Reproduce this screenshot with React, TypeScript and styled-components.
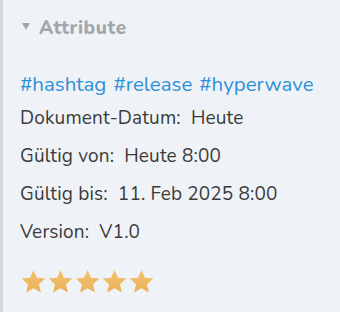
import React from 'react';
import styled, {createGlobalStyle} from "styled-components";

const GlobalStyle = createGlobalStyle`
  html, body {
    margin: 0;
    padding: 0;
    background: #eff3f7;
  }
  body {
    font-family: Nunito, "Open Sans", sans-serif;
  }
`

type RowPropsType = {
    label: string
    value: string
}

const Row = (props: RowPropsType) => {
    return (
        <StyledRow>
            {props.label}:&nbsp;&nbsp;{props.value}
        </StyledRow>
    );
};

const Star = () => (
    <svg width="27" height="27" viewBox="0 0 24 24">
        <defs>
            <linearGradient id="starGrad" x1="0" y1="0" x2="0" y2="1">
                <stop offset="0%" stopColor="#f2c26c"/>
                <stop offset="100%" stopColor="#ebb05a"/>
            </linearGradient>
        </defs>
        <path
            d="M12 1.8l3.1 6.9 7.4.7-5.6 5 1.7 7.4L12 17.9l-6.6 3.9 1.7-7.4-5.6-5 7.4-.7z"
            fill="url(#starGrad)"
        />
    </svg>
);

export default function App() {
    const tags = ["#hashtag", "#release", "#hyperwave"];
    return (
        <>
            <GlobalStyle/>
            <Panel>
                <Header>
                    <Caret/>
                    <Title>Attribute</Title>
                </Header>
                <Body>
                    <Tags>
                        {tags.map(t => <Tag key={t}>{t}</Tag>)}
                    </Tags>
                    <Row label="Dokument-Datum" value="Heute"/>
                    <Row label="Gültig von" value="Heute 8:00"/>
                    <Row label="Gültig bis" value="11. Feb 2025 8:00"/>
                    <Row label="Version" value="V1.0"/>
                    <Stars>
                        {[0, 1, 2, 3, 4].map(i => <Star key={i}/>)}
                    </Stars>
                </Body>
            </Panel>
        </>
    );
}

const Panel = styled.div`
  width: 340px;
  height: 312px;
  box-sizing: border-box;
  border-left: 3px solid #d3d6da;
  background: #eff3f7;
  overflow: hidden;
`

const Header = styled.div`
  display: flex;
  align-items: center;
  gap: 9px;
  padding: 14px 0 0 19px;
  height: 28px;
`

const Caret = styled.span`
  width: 0;
  height: 0;
  border-left: 4px solid transparent;
  border-right: 4px solid transparent;
  border-top: 7px solid #a3a7ab;
  margin-top: -3px;
`

const Title = styled.h3`
  margin: 0;
  font-size: 19px;
  font-weight: 800;
  letter-spacing: 0.6px;
  color: #a3a7ab;
`

const Body = styled.div`
  padding: 29px 0 0 17px;
  display: flex;
  flex-direction: column;
`

const Tags = styled.div`
  display: flex;
  gap: 7px;
  font-size: 20.5px;
  line-height: 26px;
  color: #2d90d8;
  margin-bottom: 2px;
`

const Tag = styled.span``

const StyledRow = styled.div`
  font-size: 19px;
  letter-spacing: 0.15px;
  line-height: 38px;
  color: #3b3b3b;
`

const Stars = styled.div`
  display: flex;
  gap: 0;
  margin-top: 17px;
`
